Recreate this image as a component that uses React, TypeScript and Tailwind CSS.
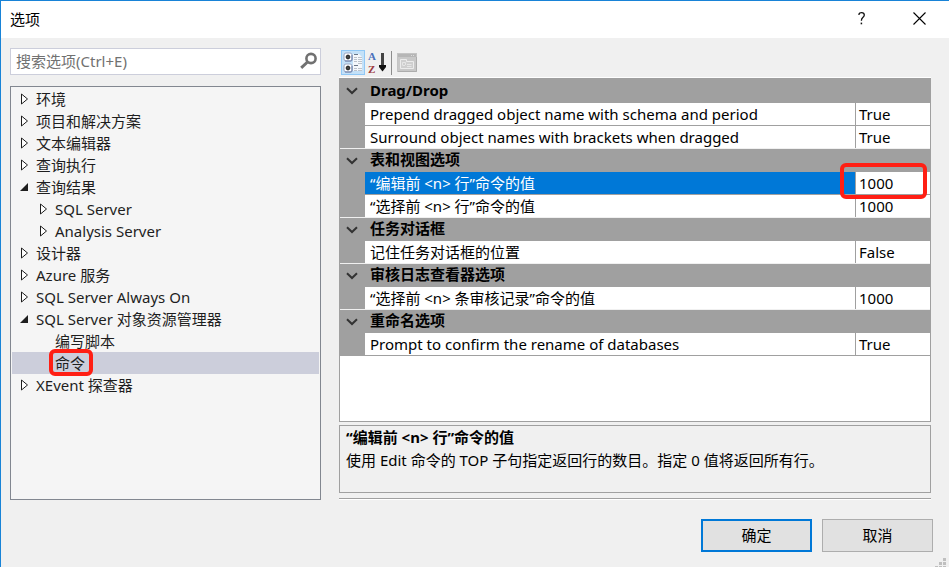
import { memo } from "react";

interface TreeItem {
  label: string;
  level: number;
  state?: "open" | "closed";
  selected?: boolean;
}

interface Property {
  name: string;
  value: string;
  selected?: boolean;
}

interface Category {
  title: string;
  items: Property[];
}

const treeItems: TreeItem[] = [
  { label: "环境", level: 0, state: "closed" },
  { label: "项目和解决方案", level: 0, state: "closed" },
  { label: "文本编辑器", level: 0, state: "closed" },
  { label: "查询执行", level: 0, state: "closed" },
  { label: "查询结果", level: 0, state: "open" },
  { label: "SQL Server", level: 1, state: "closed" },
  { label: "Analysis Server", level: 1, state: "closed" },
  { label: "设计器", level: 0, state: "closed" },
  { label: "Azure 服务", level: 0, state: "closed" },
  { label: "SQL Server Always On", level: 0, state: "closed" },
  { label: "SQL Server 对象资源管理器", level: 0, state: "open" },
  { label: "编写脚本", level: 1 },
  { label: "命令", level: 1, selected: true },
  { label: "XEvent 探查器", level: 0, state: "closed" },
];

const categories: Category[] = [
  {
    title: "Drag/Drop",
    items: [
      { name: "Prepend dragged object name with schema and period", value: "True" },
      { name: "Surround object names with brackets when dragged", value: "True" },
    ],
  },
  {
    title: "表和视图选项",
    items: [
      { name: "“编辑前 <n> 行”命令的值", value: "1000", selected: true },
      { name: "“选择前 <n> 行”命令的值", value: "1000" },
    ],
  },
  {
    title: "任务对话框",
    items: [{ name: "记住任务对话框的位置", value: "False" }],
  },
  {
    title: "审核日志查看器选项",
    items: [{ name: "“选择前 <n> 条审核记录”命令的值", value: "1000" }],
  },
  {
    title: "重命名选项",
    items: [{ name: "Prompt to confirm the rename of databases", value: "True" }],
  },
];

const TitleBar = () => (
  <header className="flex h-[37px] items-center justify-between bg-white pb-[2px] pl-[9px] pr-[22px]">
    <h1 className="text-[15px] leading-5 text-black">选项</h1>
    <div className="flex items-center gap-[41px]">
      <button type="button" aria-label="帮助" className="flex h-6 w-4 items-center justify-center">
        <svg width="8" height="13" viewBox="0 0 8 13" fill="none" stroke="#111" strokeWidth="1.3">
          <path d="M1 3V2Q1.300 .7 3.600 .7Q6.300 .7 6.300 3Q6.300 4.300 4.800 5.500Q3.400 6.600 3.400 8.700" />
          <path d="M3.400 10.600V12.300" strokeWidth="1.500" />
        </svg>
      </button>
      <button type="button" aria-label="关闭" className="flex h-6 w-4 items-center justify-center">
        <svg width="13" height="13" viewBox="0 0 13 13" fill="none" stroke="#000" strokeWidth="1.1">
          <path d="M.5 .5L12.500 12.500M12.500 .5L.5 12.500" />
        </svg>
      </button>
    </div>
  </header>
);

const SearchBox = () => (
  <div className="flex h-[27px] items-center border border-[#ccceDB] bg-white pb-[2px] pl-[5px] pr-[3px]">
    <input
      type="text"
      aria-label="搜索选项"
      placeholder="搜索选项(Ctrl+E)"
      className="min-w-0 flex-1 bg-transparent text-[15px] leading-5 outline-none placeholder:text-[#717171]"
    />
    <button type="button" aria-label="搜索" className="shrink-0">
      <svg width="17" height="17" viewBox="0 0 17 17" fill="none" stroke="#717171">
        <circle cx="11" cy="6.500" r="4.600" strokeWidth="2.600" />
        <path d="M7.500 10L1.200 15.800" strokeWidth="3" />
      </svg>
    </button>
  </div>
);

const Expander = ({ state }: { state?: "open" | "closed" }) => (
  <svg className="shrink-0" width="10" height="12" viewBox="0 0 10 12">
    {state === "closed" && (
      <path d="M1.500 1L7.500 6L1.500 11Z" fill="#fff" stroke="#1e1e1e" strokeWidth="1" />
    )}
    {state === "open" && <path d="M8 2V10H0Z" fill="#1e1e1e" />}
  </svg>
);

const OptionsTree = () => (
  <ul
    role="tree"
    aria-label="选项类别"
    className="flex-1 border border-[#828790] bg-[#f5f5f5] p-px text-[15px] leading-[22px] text-[#1e1e1e]"
  >
    {treeItems.map((item) => (
      <li
        key={item.label}
        role="treeitem"
        aria-selected={!!item.selected}
        className={`flex h-[22px] items-center gap-[6px] ${
          item.level === 0 ? "pl-2" : "pl-[27px]"
        } ${item.selected ? "bg-[#ccceDB]" : ""}`}
      >
        <Expander state={item.state} />
        {item.selected ? (
          <span className="relative">
            {item.label}
            <span className="absolute -bottom-[2px] -left-[6px] -right-2 -top-[3px] rounded-md border-4 border-[#ff1f14]" />
          </span>
        ) : (
          <span>{item.label}</span>
        )}
      </li>
    ))}
  </ul>
);

const Toolbar = () => (
  <div className="flex h-[29px] items-center pl-[2px]">
    <button
      type="button"
      aria-label="按分类顺序"
      className="flex h-[25px] w-6 items-center justify-center border border-[#90c8f6] bg-[#c4e1f8]"
    >
      <svg width="20" height="21" viewBox="0 0 20 21">
        <path d="M10 2H16L19 5V19H10Z" fill="#f4f7fb" />
        {[1, 12].map((y) => (
          <g key={y}>
            <rect x="1" y={y} width="8" height="8" rx="2" fill="#fff" stroke="#9ba7c4" />
            <path d={`M2 ${y + 8}H8Q9 ${y + 8} 9 ${y + 7}V${y + 2}`} fill="none" stroke="#6d7fa8" />
            <circle cx="5" cy={y + 4} r="2.200" fill="#111" />
            <path d={`M5 ${y + 1}V${y + 7}M2 ${y + 4}H8`} stroke="#777" strokeWidth=".6" />
            <path d={`M11 ${y + 1.5}H15`} stroke="#6b7687" />
          </g>
        ))}
        <path
          d="M11 5.500H14M15 5.500H19M11 7.500H14M15 7.500H19M11 9.500H14M15 9.500H19M15 11.500H19M11 16.500H14M15 16.500H19M11 18.500H14M15 18.500H19"
          stroke="#bcc2cb"
        />
      </svg>
    </button>
    <button type="button" aria-label="按字母顺序" className="flex h-[25px] w-6 items-center justify-center">
      <svg width="20" height="25" viewBox="0 0 20 25" fontFamily="Liberation Serif, serif" fontSize="11" fontWeight="700">
        <text x="1" y="10" fill="#4a70bb">A</text>
        <text x="1" y="22.500" fill="#9c3a3e">Z</text>
        <path d="M15.500 3V17" stroke="#444" strokeWidth="3" />
        <path d="M12 15H19V17L15.500 21.500L12 17Z" fill="#111" />
      </svg>
    </button>
    <div className="ml-[2px] h-6 w-px bg-[#8d8d8d]" />
    <button type="button" disabled aria-label="属性页" className="ml-[5px] flex h-[25px] w-5 items-center justify-center">
      <svg width="20" height="20" viewBox="0 0 20 20">
        <rect x=".5" y=".5" width="19" height="18" fill="#c8c8c8" stroke="#c4c4c4" />
        <rect x="1" y="1" width="18" height="3" fill="#b6b6b6" />
        <path d="M14 2.500H18" stroke="#ddd" strokeDasharray="1 1" />
        <path d="M1 18.500H19.500V4" fill="none" stroke="#adadad" />
        <path d="M3.500 15.500V6.500H9.500V8.500H16.500V15.500Z" fill="#cfcfcf" stroke="#ececec" />
        <path d="M5.500 12V9.500H8.500V12M5.500 12.500H8M10 11.500H14.500M10 13.500H14.500" fill="none" stroke="#e6e6e6" />
      </svg>
    </button>
  </div>
);

const PropertyGrid = () => (
  <div className="flex-1 border border-[#a0a0a0] bg-white">
    <table className="w-full table-fixed border-separate border-spacing-0 text-left text-[15px] leading-[22px] text-black">
      <colgroup>
        <col className="w-[25px]" />
        <col />
        <col className="w-[75px]" />
      </colgroup>
      {categories.map((category, index) => (
        <tbody key={category.title}>
          <tr className={index === 0 ? "h-6 bg-[#a0a0a0]" : "h-[23px] bg-[#a0a0a0]"}>
            <td className="p-0">
              <button
                type="button"
                aria-label={`折叠 ${category.title}`}
                className="flex h-[22px] w-6 items-center justify-center"
              >
                <svg width="12" height="8" viewBox="0 0 12 8" fill="none" stroke="#333" strokeWidth="2">
                  <path d="M1 1.200L6 6L11 1.200" />
                </svg>
              </button>
            </td>
            <th
              colSpan={2}
              scope="rowgroup"
              className={`p-0 pl-[5px] align-top font-bold leading-[21px] ${index === 0 ? "pt-px" : ""}`}
            >
              {category.title}
            </th>
          </tr>
          {category.items.map((item, i) => {
            const lastInGroup = i === category.items.length - 1 && index < categories.length - 1;
            const line = lastInGroup ? "border-[#f0f0f0]" : "border-[#a0a0a0]";
            return (
              <tr key={item.name} className="h-[23px]">
                <td className={`border-b bg-[#a0a0a0] p-0 ${line}`} />
                <th
                  scope="row"
                  className={`truncate border-b p-0 pl-[5px] font-normal ${line} ${
                    item.selected ? "bg-[#0078d7] text-white" : ""
                  }`}
                >
                  {item.name}
                </th>
                <td className={`border-b p-0 ${line}`}>
                  {item.selected ? (
                    <div className="relative border-l border-[#a0a0a0] pl-[3px]">
                      <input
                        type="text"
                        aria-label={item.name}
                        defaultValue={item.value}
                        className="block h-[22px] w-full bg-transparent outline-none"
                      />
                      <span className="pointer-events-none absolute -bottom-[5px] -left-4 -top-[9px] right-[3px] rounded-md border-4 border-[#ff1f14]" />
                    </div>
                  ) : (
                    <div className="border-l border-[#a0a0a0] pl-[3px]">{item.value}</div>
                  )}
                </td>
              </tr>
            );
          })}
        </tbody>
      ))}
    </table>
  </div>
);

const Description = () => (
  <section className="mt-[3px] h-[68px] border border-[#a0a0a0] px-[6px] text-[15px] leading-[23px] text-black">
    <h2 className="font-bold">“编辑前 &lt;n&gt; 行”命令的值</h2>
    <p>使用 Edit 命令的 TOP 子句指定返回行的数目。指定 0 值将返回所有行。</p>
  </section>
);

const Footer = () => (
  <footer className="relative flex justify-end gap-[10px] pb-[15px] pr-4 pt-[19px] text-[15px] leading-5 text-black">
    <button type="button" className="h-[33px] w-[111px] border-2 border-[#0078d7] bg-[#e1e1e1] pb-[2px]">
      确定
    </button>
    <button type="button" className="h-[33px] w-[111px] border border-[#adadad] bg-[#e1e1e1] pb-[2px]">
      取消
    </button>
    <svg className="absolute bottom-0 right-[3px]" width="11" height="9" viewBox="0 0 11 9" fill="#bfbfbf">
      <path d="M8 0h3v3h-3zM4 4h3v3h-3zM8 4h3v3h-3zM0 8h3v1h-3zM4 8h3v1h-3zM8 8h3v1h-3z" />
    </svg>
  </footer>
);

const App = memo(() => (
  <div className="flex min-h-screen flex-col border-l border-t border-[#1883d7] bg-[#f0f0f0] font-['Noto_Sans','Noto_Sans_CJK_SC',sans-serif]">
    <TitleBar />
    <main className="flex flex-1 gap-[18px] pl-[9px] pr-[18px] pt-[10px]">
      <div className="flex w-[311px] shrink-0 flex-col gap-[11px]">
        <SearchBox />
        <OptionsTree />
      </div>
      <div className="flex min-w-0 flex-1 flex-col">
        <Toolbar />
        <div className="h-px bg-white" />
        <PropertyGrid />
        <Description />
        <div className="mt-[5px] h-[2px] border-b border-t border-b-white border-t-[#a0a0a0]" />
      </div>
    </main>
    <Footer />
  </div>
));

App.displayName = "App";
export default App;
